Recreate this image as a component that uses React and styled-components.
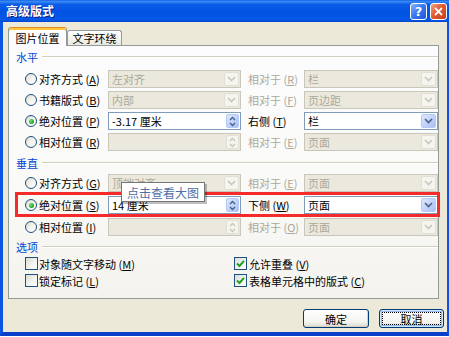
import React from "react";
import styled, { createGlobalStyle } from "styled-components";

const FONT = `"Noto Sans CJK SC", "Noto Sans", sans-serif`;

const Global = createGlobalStyle`
  html, body { margin: 0; padding: 0; background: #ffffff; }
  body { font-family: ${FONT}; }
  * { box-sizing: border-box; }
`;

const Window = styled.div`
  width: 449px;
  height: 336px;
  display: flex;
  flex-direction: column;
  font-family: ${FONT};
  font-size: 11px;
  color: #000;
`;

const TitleBar = styled.div`
  height: 22px;
  flex: none;
  display: flex;
  align-items: center;
  padding: 0 2px 0 6px;
  background: linear-gradient(
    to bottom,
    #0a5fe8 0%,
    #3d8bf5 6%,
    #0b5ce6 20%,
    #0052e0 55%,
    #0559e8 88%,
    #0047d0 100%
  );
`;

const Title = styled.div`
  flex: 1;
  color: #fff;
  font-weight: bold;
  font-size: 12px;
  line-height: 22px;
  text-shadow: 1px 1px 0 #0a1e8c;
`;

const CaptionButton = styled.div`
  width: 17px;
  height: 17px;
  margin-left: ${(p) => p.$gap || 0}px;
  border: 1px solid #fff;
  border-radius: 3px;
  display: flex;
  align-items: center;
  justify-content: center;
  color: #fff;
  font-weight: bold;
  font-size: 13px;
  font-family: "DejaVu Sans", sans-serif;
  background: ${(p) =>
    p.$close
      ? "linear-gradient(135deg, #f2a588 0%, #e15a30 45%, #c6401d 100%)"
      : "linear-gradient(135deg, #8cb6fb 0%, #3b7af1 45%, #2155d6 100%)"};
`;

const Frame = styled.div`
  flex: 1;
  display: flex;
  flex-direction: column;
  background: #ece9d8;
  border-left: 3px solid #0a55e2;
  border-right: 2px solid #0a55e2;
  border-bottom: 4px solid #0a3fcb;
  padding: 5px 3px 0 5px;
`;

const Tabs = styled.div`
  height: 18px;
  display: flex;
  align-items: flex-end;
  position: relative;
  z-index: 2;
`;

const Tab = styled.div`
  height: ${(p) => (p.$active ? 19 : 15)}px;
  margin-bottom: ${(p) => (p.$active ? -1 : 0)}px;
  width: ${(p) => p.$w}px;
  display: flex;
  align-items: center;
  justify-content: center;
  border: 1px solid #919b9c;
  border-bottom: none;
  border-radius: 3px 3px 0 0;
  font-size: 11px;
  background: ${(p) =>
    p.$active ? "#fcfcfe" : "linear-gradient(#ffffff, #f3f3ef 60%, #e8e7e0)"};
  ${(p) =>
    p.$active
      ? `border-top: 1px solid #e68b2c; box-shadow: inset 0 2px 0 #ffc73c;`
      : ""}
  padding-top: ${(p) => (p.$active ? 1 : 0)}px;
`;

const Panel = styled.div`
  width: 431px;
  height: 254px;
  border: 1px solid #919b9c;
  background: linear-gradient(#fcfcfe 0%, #fafaf8 50%, #f4f3ee 100%);
  padding: 4px 0 0 7px;
  position: relative;
  z-index: 1;
`;

const SectionHead = styled.div`
  display: flex;
  align-items: center;
  height: 14px;
  margin-top: ${(p) => p.$mt || 0}px;
  color: #0046d5;
  font-size: 11px;
`;

const HeadLine = styled.div`
  flex: 1;
  margin-left: 4px;
  border-top: 1px solid #d0d0bf;
  border-bottom: 1px solid #ffffff;
`;

const Rows = styled.div`
  display: flex;
  flex-direction: column;
  gap: ${(p) => p.$gap}px;
  margin: ${(p) => p.$mt}px 0 0 9px;
`;

const Row = styled.div`
  display: grid;
  grid-template-columns: 83px 133px 7px 56px 134px;
  height: 18px;
  align-items: center;
  position: relative;
`;

const OptionLabel = styled.label`
  display: flex;
  align-items: center;
  gap: 2px;
  white-space: nowrap;
  font-size: 11px;
`;

const Radio = styled.span`
  width: 12px;
  height: 12px;
  border-radius: 50%;
  border: 1px solid #1c5180;
  background: linear-gradient(135deg, #dcdad0 0%, #f4f3ee 50%, #ffffff 100%);
  display: flex;
  align-items: center;
  justify-content: center;
  flex: none;
`;

const RadioDot = styled.span`
  width: 5px;
  height: 5px;
  border-radius: 50%;
  background: radial-gradient(circle at 35% 35%, #6ee06e, #21a121 70%);
`;

const SideLabel = styled.span`
  grid-column: 4;
  white-space: nowrap;
  font-size: 11px;
  color: ${(p) => (p.$disabled ? "#aca899" : "#000")};
`;

const Field = styled.div`
  grid-column: ${(p) => p.$col};
  height: 18px;
  border: 1px solid ${(p) => (p.$disabled ? "#c9c7ba" : "#7f9db9")};
  background: ${(p) => (p.$disabled ? "#ebe9dd" : "#ffffff")};
  color: ${(p) => (p.$disabled ? "#aca899" : "#000")};
  display: flex;
  align-items: center;
  padding: 1px;
`;

const FieldText = styled.span`
  flex: 1;
  padding-left: 2px;
  white-space: nowrap;
  overflow: hidden;
  font-size: 11px;
  line-height: 14px;
`;

const FieldButton = styled.span`
  width: ${(p) => (p.$spin ? 13 : 15)}px;
  height: 14px;
  flex: none;
  display: flex;
  align-items: center;
  justify-content: center;
  border: 1px solid ${(p) => (p.$disabled ? "#e2e0d6" : "#b5c9f7")};
  border-radius: 2px;
  background: ${(p) =>
    p.$disabled
      ? "#f5f4ef"
      : "linear-gradient(135deg, #dfe8fd 0%, #c2d3fc 50%, #a9c0f5 100%)"};
`;

const Highlight = styled.div`
  position: absolute;
  left: -10px;
  top: -4px;
  right: -2px;
  bottom: -3px;
  border: 3px solid #f52a2a;
  pointer-events: none;
`;

const Tooltip = styled.div`
  position: absolute;
  left: 96px;
  top: -14px;
  width: 84px;
  height: 20px;
  background: #ffffff;
  border: 1px solid #777777;
  box-shadow: 2px 2px 0 rgba(0, 0, 0, 0.25);
  color: #4f6fa6;
  font-size: 12px;
  display: flex;
  align-items: center;
  justify-content: center;
  white-space: nowrap;
  z-index: 3;
`;

const Checks = styled.div`
  display: grid;
  grid-template-columns: 209px 1fr;
  grid-auto-rows: 17px;
  align-items: center;
  margin: 1px 0 0 9px;
`;

const CheckItem = styled.label`
  display: flex;
  align-items: center;
  gap: ${(p) => p.$gap || 1}px;
  white-space: nowrap;
  font-size: 11px;
`;

const CheckBox = styled.span`
  width: 13px;
  height: 13px;
  flex: none;
  border: 1px solid #1c5180;
  background: linear-gradient(135deg, #dcdcd7 0%, #f4f4f0 60%, #ffffff 100%);
  display: flex;
  align-items: center;
  justify-content: center;
`;

const Buttons = styled.div`
  display: flex;
  justify-content: flex-end;
  gap: 10px;
  margin-top: 10px;
`;

const Button = styled.button`
  width: ${(p) => p.$w}px;
  height: 19px;
  padding: 0;
  border: 1px solid #003c74;
  border-radius: 3px;
  font-family: ${FONT};
  font-size: 11px;
  color: #000;
  background: linear-gradient(#ffffff 0%, #f4f4f0 70%, #dcd8cc 100%);
  box-shadow: ${(p) =>
    p.$focus
      ? "inset 0 0 0 1px #cee7ff, inset 0 0 0 2px #98b8ea"
      : "inset -1px -1px 0 #d6d0c5"};
  ${(p) => (p.$focus ? "outline: 1px dotted #000; outline-offset: -4px;" : "")}
`;

const Chevron = ({ color }) => (
  <svg width="9" height="6" viewBox="0 0 9 6">
    <path d="M1 1 L4.5 4.5 L8 1" fill="none" stroke={color} strokeWidth="1.6" />
  </svg>
);

const SpinArrows = ({ color }) => (
  <svg width="7" height="11" viewBox="0 0 7 11">
    <path
      d="M1 4 L3.5 1.5 L6 4 M1 7 L3.5 9.5 L6 7"
      fill="none"
      stroke={color}
      strokeWidth="1.4"
    />
  </svg>
);

const Mn = ({ k }) => (
  <span>
    {" "}(<u>{k}</u>)
  </span>
);

const Box = ({ col, text, disabled, spin }) => (
  <Field $col={col} $disabled={disabled}>
    <FieldText>{text}</FieldText>
    <FieldButton $disabled={disabled} $spin={spin}>
      {spin ? (
        <SpinArrows color={disabled ? "#c9c7ba" : "#4d6185"} />
      ) : (
        <Chevron color={disabled ? "#c9c7ba" : "#4d6185"} />
      )}
    </FieldButton>
  </Field>
);

const PositionRow = ({ row, children }) => (
  <Row>
    <OptionLabel>
      <Radio>{row.checked && <RadioDot />}</Radio>
      <span>
        {row.label}
        <Mn k={row.key} />
      </span>
    </OptionLabel>
    <Box col={2} text={row.value} disabled={!row.checked} spin={row.spin} />
    <SideLabel $disabled={!row.checked}>
      {row.side}
      <Mn k={row.sideKey} />
    </SideLabel>
    <Box col={5} text={row.sideValue} disabled={!row.checked} />
    {children}
  </Row>
);

const horizontal = [
  { label: "对齐方式", key: "A", value: "左对齐", side: "相对于", sideKey: "R", sideValue: "栏" },
  { label: "书籍版式", key: "B", value: "内部", side: "相对于", sideKey: "F", sideValue: "页边距" },
  { label: "绝对位置", key: "P", value: "-3.17 厘米", spin: true, checked: true, side: "右侧", sideKey: "T", sideValue: "栏" },
  { label: "相对位置", key: "R", value: "", spin: true, side: "相对于", sideKey: "E", sideValue: "页面" },
];

const vertical = [
  { label: "对齐方式", key: "G", value: "顶端对齐", side: "相对于", sideKey: "E", sideValue: "页面" },
  { label: "绝对位置", key: "S", value: "14 厘米", spin: true, checked: true, side: "下侧", sideKey: "W", sideValue: "页面" },
  { label: "相对位置", key: "I", value: "", spin: true, side: "相对于", sideKey: "O", sideValue: "页面" },
];

const options = [
  { label: "对象随文字移动", key: "M", checked: false },
  { label: "允许重叠", key: "V", checked: true },
  { label: "锁定标记", key: "L", checked: false },
  { label: "表格单元格中的版式", key: "C", checked: true },
];

export default function App() {
  return (
    <>
      <Global />
      <Window>
        <TitleBar>
          <Title>高级版式</Title>
          <CaptionButton>?</CaptionButton>
          <CaptionButton $close $gap={3}>
            <svg width="9" height="9" viewBox="0 0 9 9">
              <path d="M1 1 L8 8 M8 1 L1 8" stroke="#fff" strokeWidth="1.8" />
            </svg>
          </CaptionButton>
        </TitleBar>
        <Frame>
          <Tabs>
            <Tab $active $w={59}>图片位置</Tab>
            <Tab $w={55}>文字环绕</Tab>
          </Tabs>
          <Panel>
            <SectionHead>
              水平
              <HeadLine />
            </SectionHead>
            <Rows $gap={3} $mt={6}>
              {horizontal.map((r) => (
                <PositionRow key={r.key} row={r} />
              ))}
            </Rows>
            <SectionHead $mt={5}>
              垂直
              <HeadLine />
            </SectionHead>
            <Rows $gap={4} $mt={4}>
              {vertical.map((r) => (
                <PositionRow key={r.key} row={r}>
                  {r.checked && (
                    <>
                      <Highlight />
                      <Tooltip>点击查看大图</Tooltip>
                    </>
                  )}
                </PositionRow>
              ))}
            </Rows>
            <SectionHead $mt={4}>
              选项
              <HeadLine />
            </SectionHead>
            <Checks>
              {options.map((o, i) => (
                <CheckItem key={o.key} $gap={i % 2 ? 2 : 0}>
                  <CheckBox>
                    {o.checked && (
                      <svg width="9" height="9" viewBox="0 0 9 9">
                        <path
                          d="M1 4.5 L3.5 7 L8 1.8"
                          fill="none"
                          stroke="#21a121"
                          strokeWidth="2"
                        />
                      </svg>
                    )}
                  </CheckBox>
                  <span>
                    {o.label}
                    <Mn k={o.key} />
                  </span>
                </CheckItem>
              ))}
            </Checks>
          </Panel>
          <Buttons>
            <Button $w={66}>确定</Button>
            <Button $w={65} $focus>
              取消
            </Button>
          </Buttons>
        </Frame>
      </Window>
    </>
  );
}
